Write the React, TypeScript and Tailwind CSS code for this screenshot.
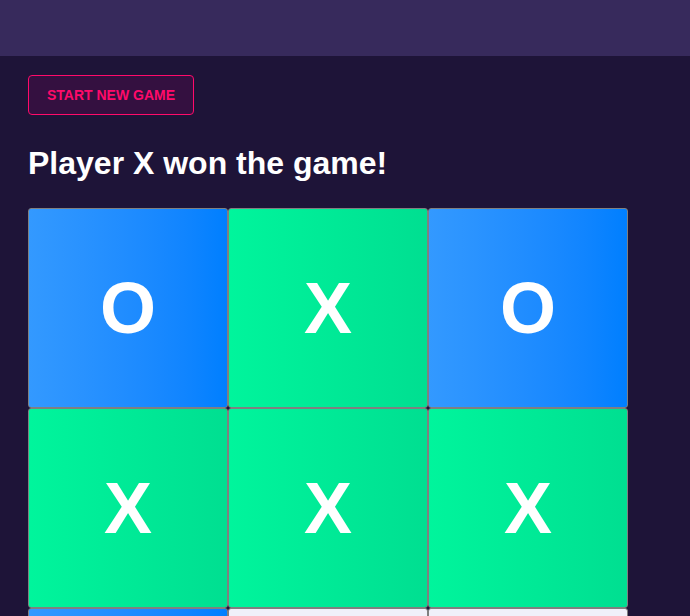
import React from "react";

const board = ["O", "X", "O", "X", "X", "X", "O", "", ""];

function Cell({ v }: { v: string }) {
  const bg =
    v === "O"
      ? "bg-gradient-to-r from-[#3399ff] to-[#007fff]"
      : v === "X"
      ? "bg-gradient-to-r from-[#00f59c] to-[#00df91]"
      : "bg-[#f0f0fa]";
  return (
    <div
      className={`h-[200px] border border-[#808080] rounded-[3px] flex items-center justify-center text-white font-bold text-[72px] leading-none ${bg}`}
    >
      {v}
    </div>
  );
}

export default function App() {
  return (
    <div
      className="min-h-[616px] bg-[#1e1438]"
      style={{ fontFamily: '"Liberation Sans", Arial, sans-serif' }}
    >
      <div className="h-14 bg-[#372a5c]" />
      <div className="px-7 pt-[19px]">
        <button className="h-10 px-[18px] border border-[#ff0a6a] rounded bg-[#341040] text-[#ff0a6a] text-sm font-bold uppercase">
          Start new game
        </button>
        <h2 className="mt-[29px] text-[32px] leading-[1.2] font-bold text-white">
          Player X won the game!
        </h2>
        <div className="mt-[26px] w-[600px] grid grid-cols-3">
          {board.map((v, i) => (
            <Cell key={i} v={v} />
          ))}
        </div>
      </div>
    </div>
  );
}
